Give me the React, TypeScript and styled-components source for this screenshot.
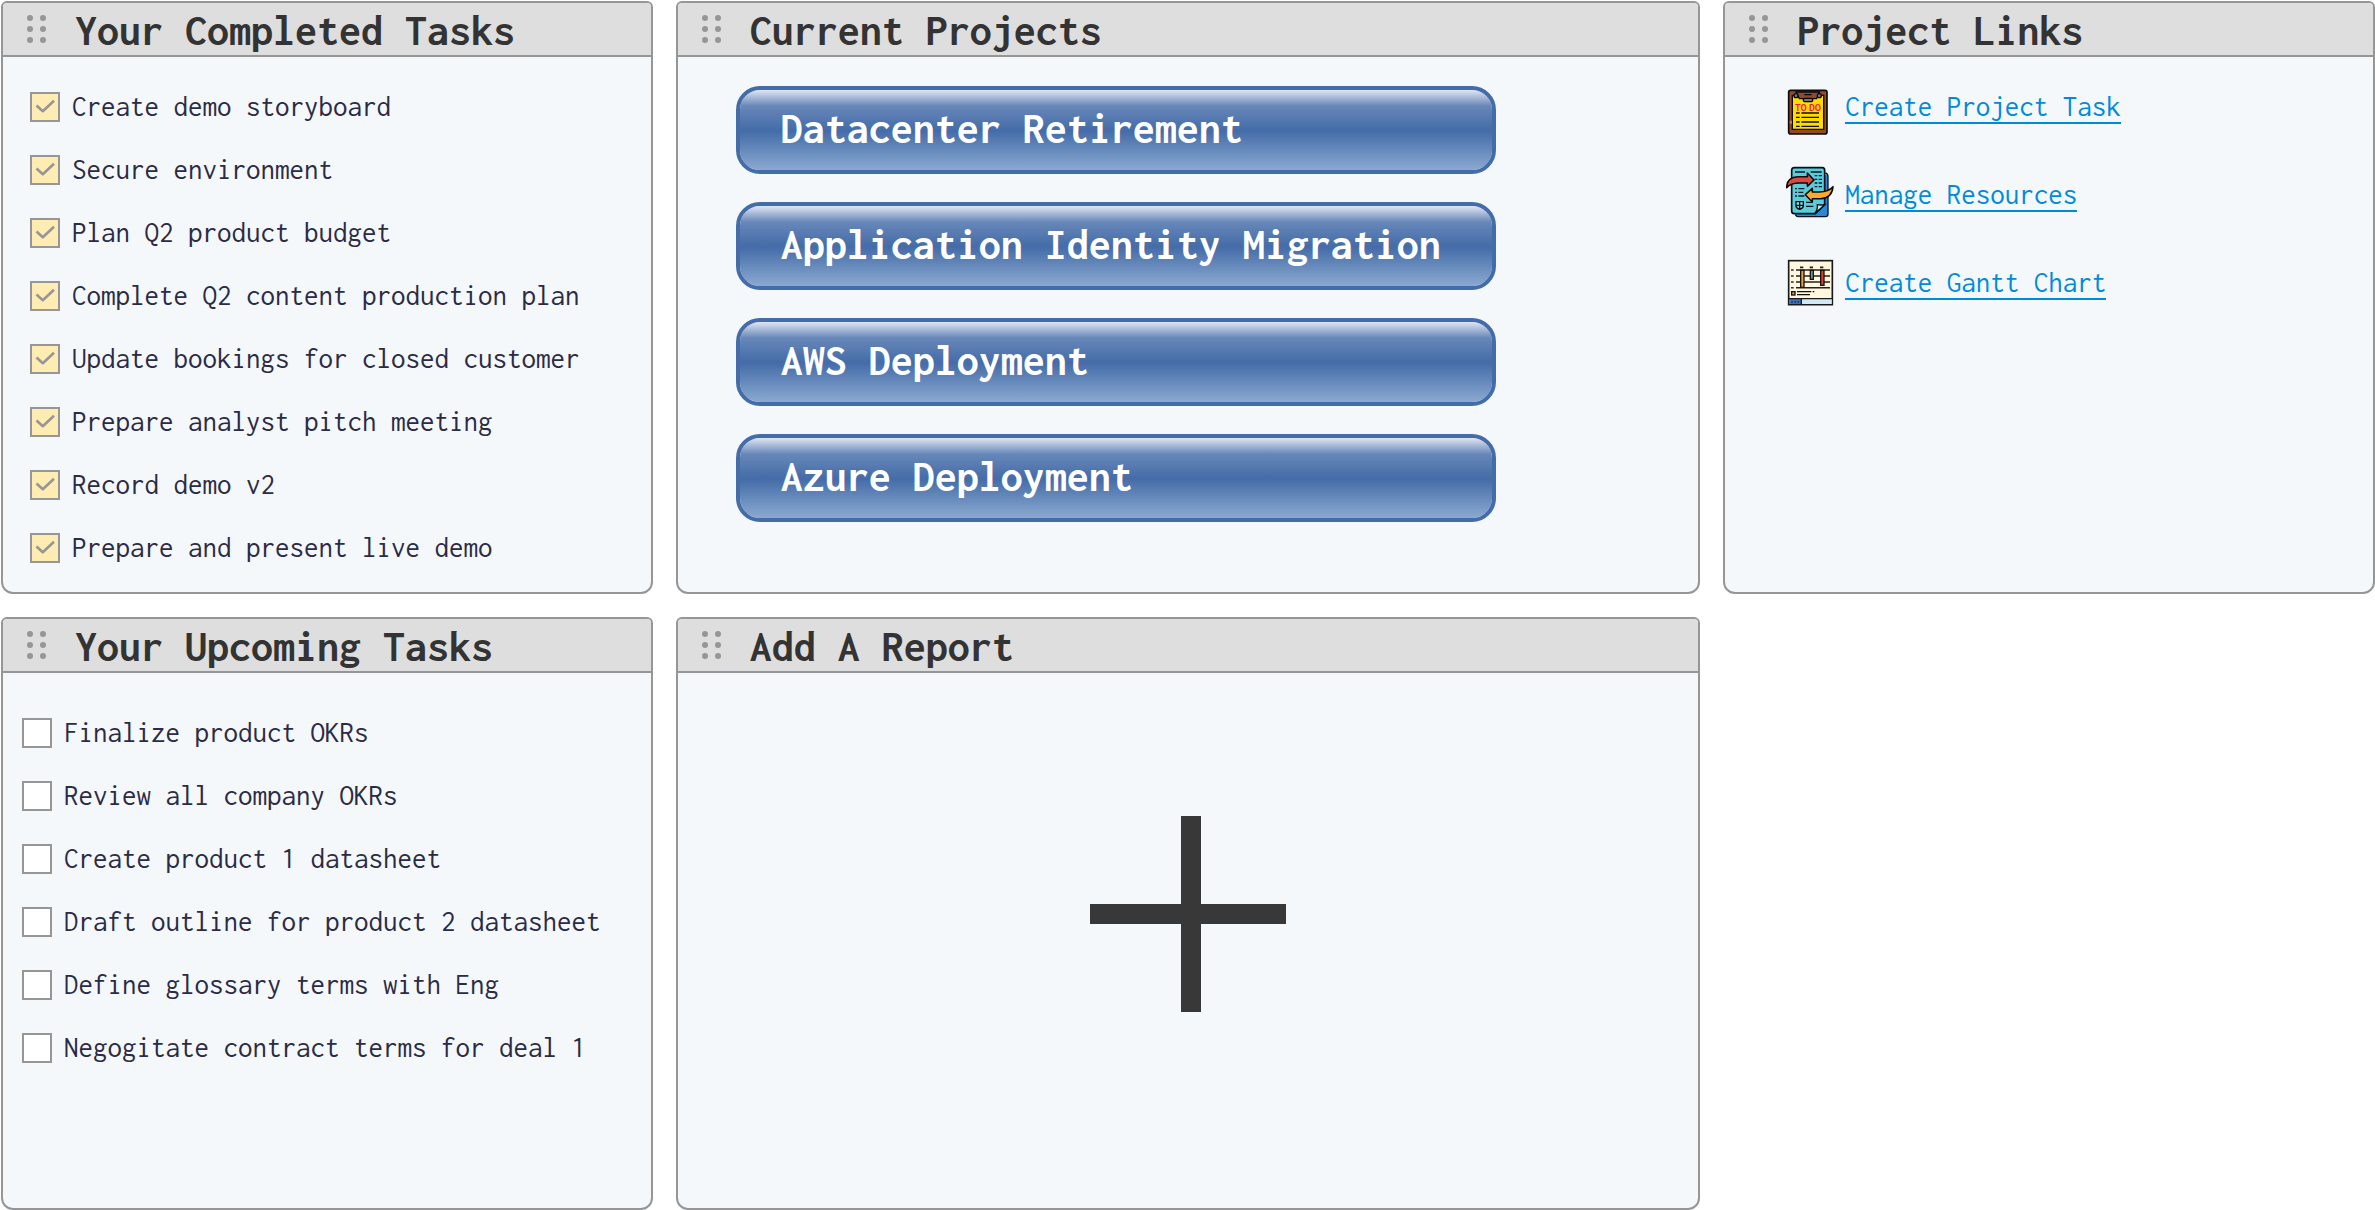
import React, { useId, useState } from 'react';
import styled, { createGlobalStyle } from 'styled-components';

const color = {
  line: '#969696',
  header: '#dedede',
  panel: '#f4f8fb',
  title: '#333333',
  text: '#2b2b45',
  link: '#008bd9',
  blue: '#446ca8',
  done: '#ffecb3',
};

const GlobalStyle = createGlobalStyle`
  *, *::before, *::after { box-sizing: border-box; }
  body { margin: 0; background: #ffffff; }
  #root, button, input, label, a {
    font-family: Inconsolata, 'DejaVu Sans Mono', 'Liberation Mono', monospace;
  }
`;

const Board = styled.main`
  display: grid;
  grid-template-columns: 7fr 11fr 7fr;
  grid-auto-rows: 1fr;
  gap: 23px;
  min-height: 100vh;
  padding: 1px 0 0 1px;
`;

const PanelBox = styled.section`
  display: flex;
  flex-direction: column;
  min-width: 0;
  overflow: hidden;
  background: ${color.panel};
  border: 2px solid ${color.line};
  border-radius: 6px 6px 12px 12px;
`;

const PanelHeader = styled.header`
  display: flex;
  align-items: center;
  gap: 28px;
  height: 54px;
  padding-left: 24px;
  background: ${color.header};
  border-bottom: 2px solid ${color.line};
`;

const DragHandle = styled.button`
  display: block;
  padding: 0;
  border: 0;
  background: none;
  cursor: grab;

  svg { display: block; }
`;

const PanelTitle = styled.h2`
  margin: 0;
  padding-top: 2px;
  color: ${color.title};
  font-size: 44px;
  font-weight: 700;
  line-height: 48px;
  white-space: nowrap;
`;

const TaskList = styled.ul<{ $top: number; $left: number }>`
  display: flex;
  flex-direction: column;
  gap: 33px;
  margin: 0;
  padding: ${(p) => p.$top}px 0 24px ${(p) => p.$left}px;
  list-style: none;
`;

const TaskItem = styled.li`
  display: flex;
  align-items: center;
  gap: 12px;
  height: 30px;
`;

const CheckCell = styled.span`
  display: grid;
  width: 30px;
  height: 30px;

  > * { grid-area: 1 / 1; }
  svg { pointer-events: none; }
`;

const CheckInput = styled.input`
  appearance: none;
  width: 30px;
  height: 30px;
  margin: 0;
  background: #ffffff;
  border: 2px solid ${color.line};

  &:checked { background: ${color.done}; }
`;

const TaskLabel = styled.label`
  color: ${color.text};
  font-size: 29px;
  font-weight: 400;
  line-height: 32px;
  white-space: nowrap;
`;

const ProjectList = styled.div`
  display: flex;
  flex-direction: column;
  gap: 28px;
  padding: 29px 58px;
`;

const ProjectButton = styled.button`
  width: 100%;
  max-width: 760px;
  height: 88px;
  padding: 0 0 4px 41px;
  border: 4px solid ${color.blue};
  border-radius: 24px;
  background: linear-gradient(#dfe5f2 0%, #6787b8 20%, ${color.blue} 51%, #8ba9d0 100%) padding-box;
  color: #ffffff;
  font-size: 44px;
  font-weight: 700;
  line-height: 48px;
  text-align: left;
  white-space: nowrap;
  cursor: pointer;
`;

const AddArea = styled.div`
  display: flex;
  justify-content: center;
  padding-top: 143px;
`;

const AddButton = styled.button`
  padding: 0;
  border: 0;
  background: none;
  cursor: pointer;

  svg { display: block; }
`;

const LinkList = styled.ul`
  display: flex;
  flex-direction: column;
  gap: 16px;
  margin: 0;
  padding: 17px 0 0 61px;
  list-style: none;
`;

const LinkItem = styled.li`
  display: flex;
  gap: 11px;
  height: 72px;
`;

const ProjectLink = styled.a`
  align-self: flex-start;
  margin-top: 18px;
  border-bottom: 2px solid ${color.link};
  color: ${color.link};
  font-size: 29px;
  line-height: 30px;
  text-decoration: none;
  white-space: nowrap;
`;

function Panel({ title, children }: { title: string; children: React.ReactNode }) {
  return (
    <PanelBox>
      <PanelHeader>
        <DragHandle type="button" aria-label={`Move ${title}`}>
          <svg width="20" height="30" viewBox="0 0 20 30" fill={color.line}>
            {[4, 15, 26].map((y) => (
              <React.Fragment key={y}>
                <circle cx="3" cy={y} r="3" />
                <circle cx="16" cy={y} r="3" />
              </React.Fragment>
            ))}
          </svg>
        </DragHandle>
        <PanelTitle>{title}</PanelTitle>
      </PanelHeader>
      {children}
    </PanelBox>
  );
}

function Task({ text, done }: { text: string; done: boolean }) {
  const id = useId();
  const [checked, setChecked] = useState(done);
  return (
    <TaskItem>
      <CheckCell>
        <CheckInput id={id} type="checkbox" checked={checked} onChange={() => setChecked(!checked)} />
        {checked && (
          <svg width="30" height="30" viewBox="0 0 30 30" fill="none" stroke={color.line} strokeWidth="2.6">
            <path d="M6.5 13.5 L12.8 19.2 L24 8.7" strokeLinejoin="round" />
          </svg>
        )}
      </CheckCell>
      <TaskLabel htmlFor={id}>{text}</TaskLabel>
    </TaskItem>
  );
}

function ClipboardIcon() {
  return (
    <svg width="48" height="72" viewBox="48 12 144 216" aria-hidden="true">
      <rect x="56" y="61" width="115" height="131" rx="6" fill="#934a2b" stroke="#0c0a0a" strokeWidth="5" />
      <path d="M67 76 H161 V178 H67 Z" fill="#ffdb00" stroke="#0c0a0a" strokeWidth="4" />
      <path d="M78 66 H148 L140 86 H88 Z" fill="#934a2b" stroke="#0c0a0a" strokeWidth="4" />
      <circle cx="78" cy="77" r="6" fill="#77797d" stroke="#0c0a0a" strokeWidth="4" />
      <circle cx="148" cy="77" r="6" fill="#77797d" stroke="#0c0a0a" strokeWidth="4" />
      <rect x="100" y="85" width="28" height="10" rx="4" fill="#77797d" stroke="#0c0a0a" strokeWidth="4" />
      <path d="M103 74 H125" stroke="#0c0a0a" strokeWidth="4" />
      <text
        x="114"
        y="122"
        textAnchor="middle"
        fill="#f0185a"
        fontFamily="Roboto, 'Liberation Sans', sans-serif"
        fontSize="27"
        fontWeight="700"
      >
        TO DO
      </text>
      <g stroke="#14110a" strokeWidth="4">
        <path d="M78 129 H89 M94 129 H147 M78 142 H89 M94 142 H147" />
        <path d="M78 156 H89 M94 156 H147 M78 169 H89 M94 169 H147" />
      </g>
      <path d="M59 157 H66" stroke="#e0703a" strokeWidth="9" />
    </svg>
  );
}

function ResourcesIcon() {
  return (
    <svg width="48" height="72" viewBox="48 21 144 216" aria-hidden="true">
      <path d="M80 60 H168 Q174 60 174 66 V178 Q174 185 166 185 H84 Q78 185 76 178 Z" fill="#2f86d8" />
      <path d="M166 54 Q174 56 174 66 V178 Q174 185 166 185 H84 Q79 185 76 179" fill="none" stroke="#0b1620" strokeWidth="4" />
      <path
        d="M73 38 H157 Q164 38 164 46 V149 L136 176 H73 Q65 176 65 168 V46 Q65 38 73 38 Z"
        fill="#5accdc"
        stroke="#0b1014"
        strokeWidth="5"
      />
      <path d="M164 149 Q152 151 142 149 Q144 164 134 176 Z" fill="#c5eef5" stroke="#0b1014" strokeWidth="4" />
      <g stroke="#0b1a24" strokeWidth="4">
        <path d="M75 51 H105 M122 51 H155" />
        <path d="M134 62 H142 M146 62 H156 M134 73 H142 M146 73 H156 M134 84 H142 M146 84 H156 M134 95 H142 M146 95 H156" />
        <path d="M75 101 H81 M85 101 H103 M75 112 H81 M85 112 H100 M75 123 H81 M85 123 H103" />
        <path d="M108 142 H128 M108 154 H130" />
      </g>
      <path d="M78 140 H100 V153 Q98 161 89 163 Q80 161 78 153 Z M89 140 V161 M78 151 H100" fill="#8fdfe9" stroke="#0b1014" strokeWidth="4" />
      <path
        d="M50 98 Q50 66 84 65 H112 V54 L132 75 L112 94 V84 H88 Q62 84 50 98 Z"
        fill="#d94b42"
        stroke="#0b0a0a"
        strokeWidth="4.5"
        strokeLinejoin="round"
      />
      <path
        d="M189 95 Q186 130 152 131 H127 V141 L106 119 L127 100 V111 H148 Q176 110 189 95 Z"
        fill="#f9ac2c"
        stroke="#0b0a0a"
        strokeWidth="4.5"
        strokeLinejoin="round"
      />
    </svg>
  );
}

function GanttIcon() {
  return (
    <svg width="48" height="72" viewBox="48 15 144 216" aria-hidden="true">
      <rect x="56" y="47" width="131" height="132" fill="#fff8df" stroke="#1a1a1a" strokeWidth="5" />
      <rect x="58" y="162" width="36" height="15" fill="#3c6fc0" />
      <rect x="94" y="162" width="91" height="15" fill="#cdeaf6" />
      <path d="M56 161 H187 M94 161 V179" stroke="#1a1a1a" strokeWidth="4" />
      <path d="M64 171 H68 M74 171 H78 M83 171 H87" stroke="#16264a" strokeWidth="5" />
      <path d="M78 75 H180 M78 93 H180 M78 111 H180 M78 128 H180" stroke="#2b2018" strokeWidth="4.5" />
      <path d="M63 75 H71 M63 93 H71 M63 111 H71 M63 128 H71" stroke="#2b2b33" strokeWidth="4.5" />
      <path d="M90 67 H100 M119 67 H129 M150 67 H160" stroke="#222222" strokeWidth="5" />
      <rect x="92" y="76" width="10" height="51" fill="#d9a24c" stroke="#1a1310" strokeWidth="4" />
      <rect x="121" y="76" width="9" height="27" fill="#5f9f9c" stroke="#1a1310" strokeWidth="4" />
      <rect x="152" y="76" width="10" height="45" fill="#dc3f3c" stroke="#1a1310" strokeWidth="4" />
      <rect x="65" y="140" width="10" height="10" fill="#e6a868" stroke="#111111" strokeWidth="4" />
      <path d="M81 140 H124 M128 140 H133 M81 149 H120" stroke="#111111" strokeWidth="4" />
    </svg>
  );
}

const completed = [
  'Create demo storyboard',
  'Secure environment',
  'Plan Q2 product budget',
  'Complete Q2 content production plan',
  'Update bookings for closed customer',
  'Prepare analyst pitch meeting',
  'Record demo v2',
  'Prepare and present live demo',
];

const upcoming = [
  'Finalize product OKRs',
  'Review all company OKRs',
  'Create product 1 datasheet',
  'Draft outline for product 2 datasheet',
  'Define glossary terms with Eng',
  'Negogitate contract terms for deal 1',
];

const projects = [
  'Datacenter Retirement',
  'Application Identity Migration',
  'AWS Deployment',
  'Azure Deployment',
];

const links = [
  { text: 'Create Project Task', icon: <ClipboardIcon /> },
  { text: 'Manage Resources', icon: <ResourcesIcon /> },
  { text: 'Create Gantt Chart', icon: <GanttIcon /> },
];

export default function App() {
  return (
    <Board>
      <GlobalStyle />
      <Panel title="Your Completed Tasks">
        <TaskList $top={35} $left={27}>
          {completed.map((text) => (
            <Task key={text} text={text} done />
          ))}
        </TaskList>
      </Panel>
      <Panel title="Current Projects">
        <ProjectList>
          {projects.map((name) => (
            <ProjectButton key={name} type="button">
              {name}
            </ProjectButton>
          ))}
        </ProjectList>
      </Panel>
      <Panel title="Project Links">
        <LinkList>
          {links.map(({ text, icon }) => (
            <LinkItem key={text}>
              {icon}
              <ProjectLink href="#">{text}</ProjectLink>
            </LinkItem>
          ))}
        </LinkList>
      </Panel>
      <Panel title="Your Upcoming Tasks">
        <TaskList $top={45} $left={19}>
          {upcoming.map((text) => (
            <Task key={text} text={text} done={false} />
          ))}
        </TaskList>
      </Panel>
      <Panel title="Add A Report">
        <AddArea>
          <AddButton type="button" aria-label="Add a report">
            <svg width="196" height="196" viewBox="0 0 196 196" fill="#383838">
              <rect x="91" y="0" width="20" height="196" />
              <rect x="0" y="88" width="196" height="20" />
            </svg>
          </AddButton>
        </AddArea>
      </Panel>
    </Board>
  );
}
